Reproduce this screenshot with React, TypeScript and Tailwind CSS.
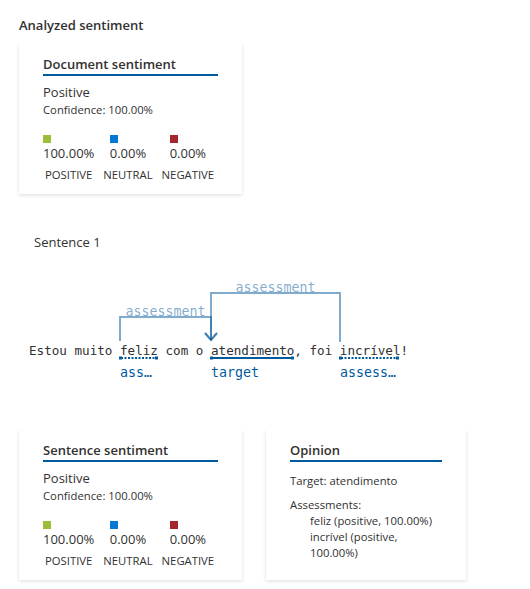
import React from "react";

interface Score {
  label: string;
  value: string;
  color: string;
}

const scores: Score[] = [
  { label: "Positive", value: "100.00%", color: "bg-[#9bbf3b]" },
  { label: "Neutral", value: "0.00%", color: "bg-[#0078d4]" },
  { label: "Negative", value: "0.00%", color: "bg-[#a4262c]" },
];

const cardShadow =
  "shadow-[0_1.6px_3.6px_rgba(0,0,0,0.13),0_0.3px_0.9px_rgba(0,0,0,0.11)]";

function CardHeader({ title }: { title: string }) {
  return (
    <div className="border-b-2 border-[#005a9e] text-[13px] font-semibold leading-[19px]">
      {title}
    </div>
  );
}

function SentimentCard({ title }: { title: string }) {
  return (
    <div className={`w-[223px] bg-white px-6 pt-3 pb-[11px] ${cardShadow}`}>
      <CardHeader title={title} />
      <div className="mt-1.5 text-[13px] leading-5">Positive</div>
      <div className="text-[11.3px] leading-4">Confidence: 100.00%</div>
      <div className="mt-[17px] flex gap-[9px]">
        {scores.map((s) => (
          <div key={s.label} className="flex flex-col items-center">
            <div className="flex flex-col items-start">
              <div className={`h-2 w-2 ${s.color}`} />
              <div className="text-[13px] leading-5">{s.value}</div>
            </div>
            <div className="mt-1 text-[11.3px] uppercase leading-4">{s.label}</div>
          </div>
        ))}
      </div>
    </div>
  );
}

function OpinionCard() {
  return (
    <div className={`w-[200px] bg-white px-6 pt-3 pb-[11px] ${cardShadow}`}>
      <CardHeader title="Opinion" />
      <div className="mt-[11px] text-[11.3px] leading-4">Target: atendimento</div>
      <div className="mt-2 text-[11.3px] leading-4">
        <div>Assessments:</div>
        <div className="pl-5">feliz (positive, 100.00%)</div>
        <div className="pl-5">incrível (positive, 100.00%)</div>
      </div>
    </div>
  );
}

// arcos e rótulos da frase
function SentenceDiagram() {
  const line = "rgba(0,90,158,0.5)";
  const mono = "'DejaVu Sans Mono', monospace";
  return (
    <svg width="530" height="110" className="block">
      <g fill="none" stroke={line} strokeWidth="2">
        <path d="M120 61 V37 H211 V60" />
        <path d="M205 53 L211 60 L217 53" />
        <path d="M340 62 V13 H211 V60" />
        <path d="M205 53 L211 60 L217 53" />
      </g>
      <g fontFamily={mono} fontSize="13.3" fill={line} textAnchor="middle">
        <text x="165.5" y="36">assessment</text>
        <text x="275.5" y="12">assessment</text>
      </g>
      <text x="29" y="75" fontFamily={mono} fontSize="12.6" fill="#323130">
        Estou muito feliz com o atendimento, foi incrível!
      </text>
      <g stroke="#005a9e" strokeWidth="2">
        <line x1="121" y1="78" x2="156" y2="78" strokeDasharray="2 1.5" />
        <line x1="211" y1="78" x2="293" y2="78" />
        <line x1="341" y1="78" x2="397" y2="78" strokeDasharray="2 1.5" />
      </g>
      <g fill="#005a9e">
        <rect x="119" y="76.5" width="3" height="3" />
        <rect x="155" y="76.5" width="3" height="3" />
        <rect x="210" y="76.5" width="3" height="3" />
        <rect x="291" y="76.5" width="3" height="3" />
        <rect x="339" y="76.5" width="3" height="3" />
        <rect x="396" y="76.5" width="3" height="3" />
      </g>
      <g fontFamily={mono} fontSize="13.3" fill="#005a9e">
        <text x="120" y="97">ass…</text>
        <text x="211" y="97">target</text>
        <text x="340" y="97">assess…</text>
      </g>
    </svg>
  );
}

export default function App() {
  return (
    <div className="h-[589px] w-[530px] bg-white pt-[15px] text-[#323130] [font-family:'Open_Sans',sans-serif]">
      <div className="px-[19px] text-[13px] font-semibold leading-5">Analyzed sentiment</div>
      <div className="mt-[8px] px-[19px]">
        <SentimentCard title="Document sentiment" />
      </div>
      <div className="mt-[38px] pl-[34px] text-[13px] leading-5">Sentence 1</div>
      <div className="mt-[28px]">
        <SentenceDiagram />
      </div>
      <div className="mt-[39px] flex gap-6 px-[19px]">
        <SentimentCard title="Sentence sentiment" />
        <OpinionCard />
      </div>
    </div>
  );
}
